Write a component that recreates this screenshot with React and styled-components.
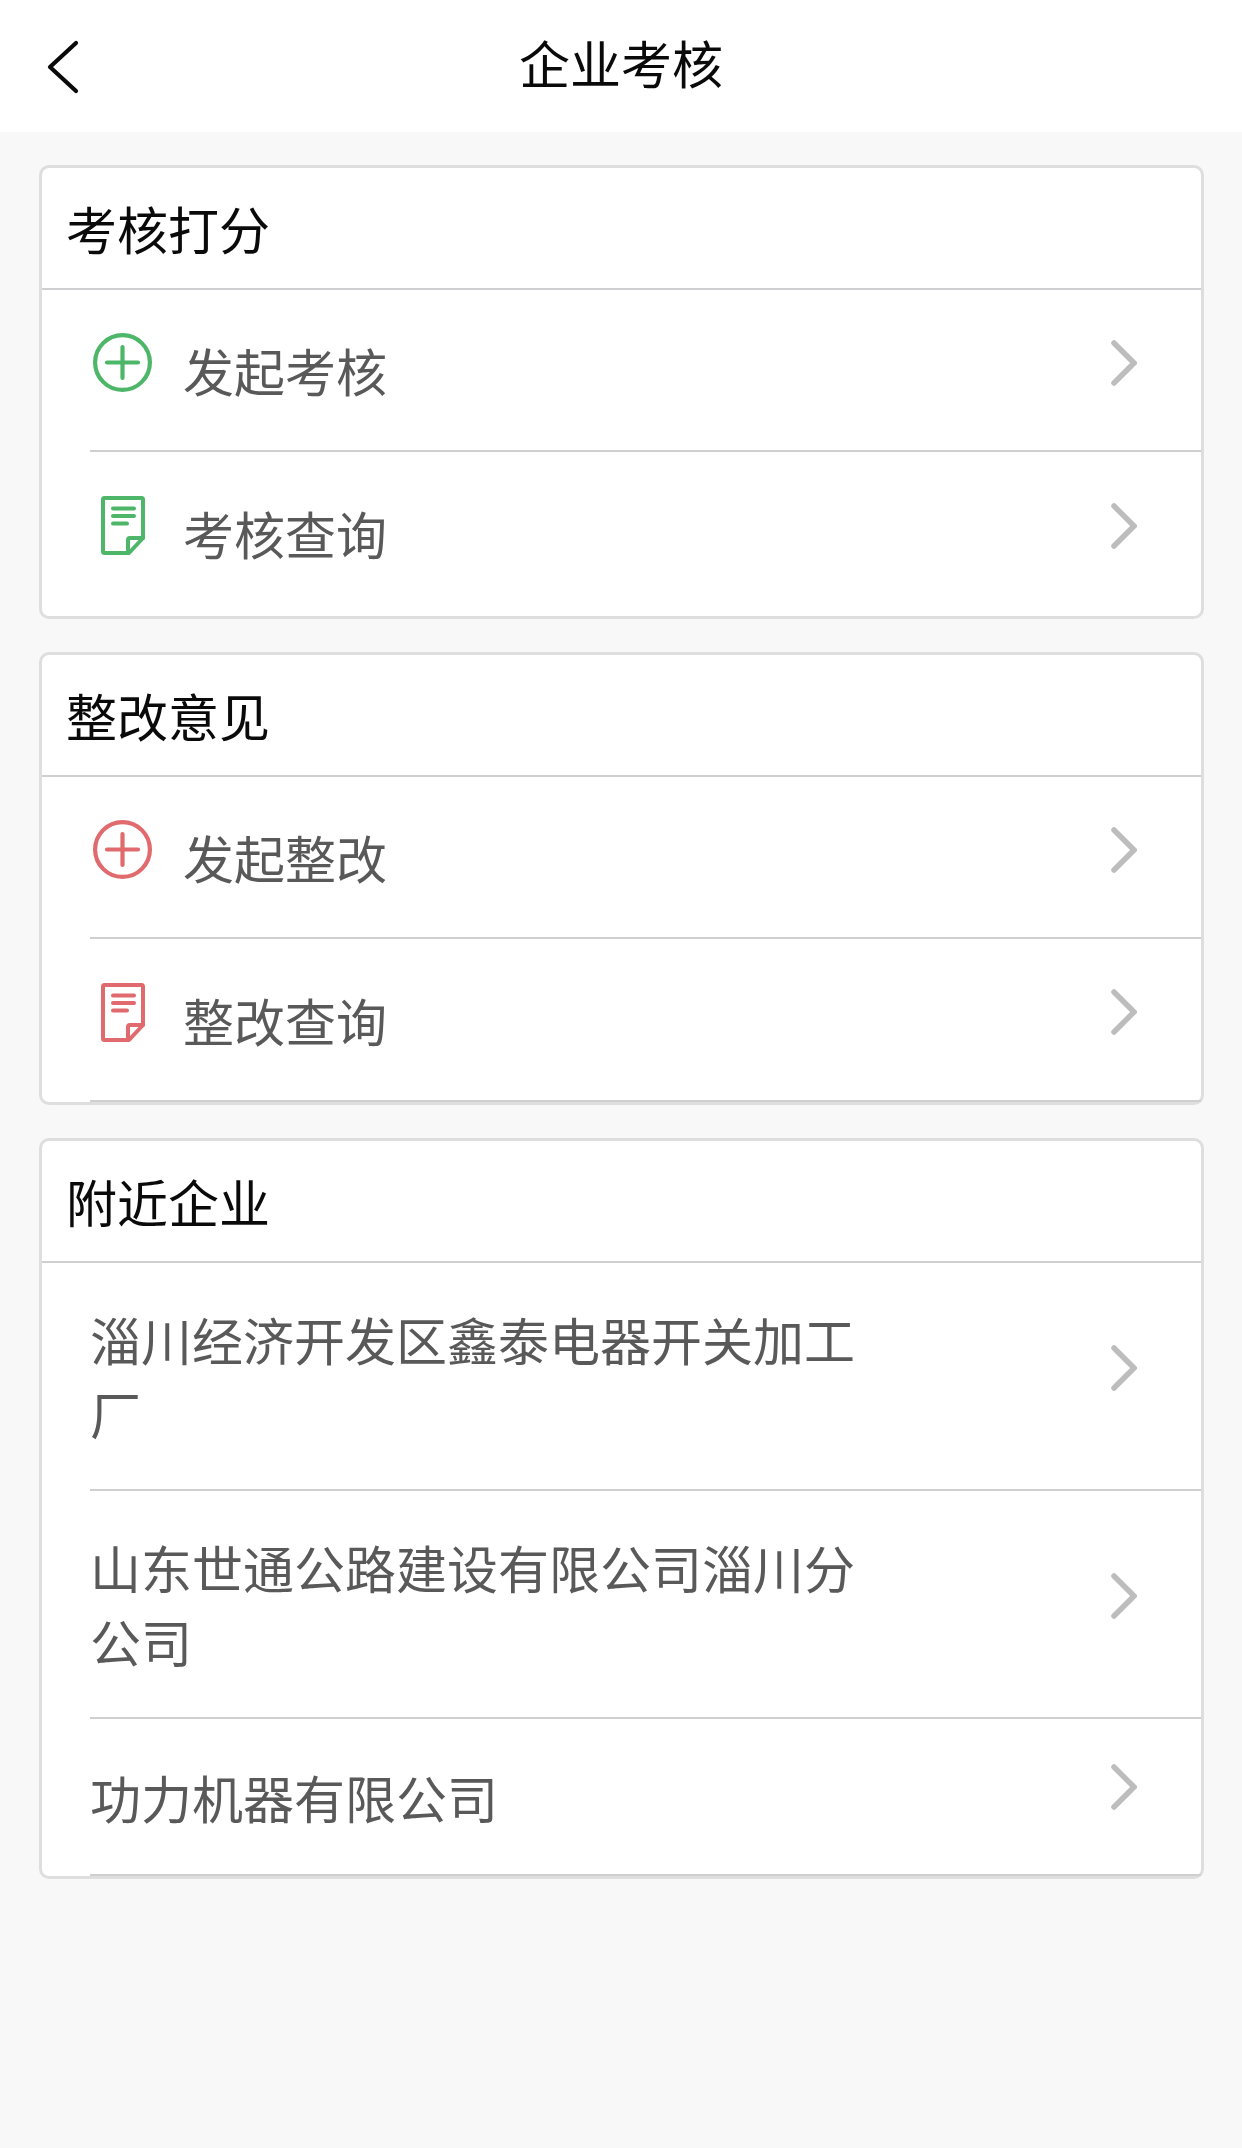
import React from 'react';
import styled, { createGlobalStyle } from 'styled-components';

const GlobalStyle = createGlobalStyle`
    html, body {
        margin: 0;
        padding: 0;
        background: #f8f8f8;
    }
    body {
        font-family: "Noto Sans CJK SC", "Noto Sans", sans-serif;
    }
`;

const Page = styled.div`
    width: 1242px;
    height: 2148px;
    overflow: hidden;
    background: #f8f8f8;
`;

const NavBar = styled.header`
    display: grid;
    grid-template-columns: 1fr auto 1fr;
    align-items: center;
    height: 132px;
    padding: 0 47px;
    box-sizing: border-box;
    background: #fff;
`;

const BackIcon = styled.svg`
    display: block;
    width: 32px;
    height: 54px;
    margin-top: 2px;
`;

const NavTitle = styled.h1`
    margin: 0 0 8px;
    font-size: 51px;
    font-weight: 400;
    line-height: 70px;
    color: #0a0a0a;
`;

const Content = styled.main`
    display: flex;
    flex-direction: column;
    gap: 33px;
    padding: 33px 38px 0 39px;
`;

const Card = styled.section`
    border: 3px solid #dedede;
    border-radius: 10px;
    background: #fff;
`;

const CardTitle = styled.h2`
    display: flex;
    align-items: center;
    box-sizing: content-box;
    height: 119px;
    margin: 0;
    padding: 0 0 1px 24px;
    border-bottom: 2px solid #cfcfd2;
    font-size: 51px;
    font-weight: 400;
    color: #0a0a0a;
`;

const Row = styled.div`
    display: flex;
    align-items: center;
    justify-content: space-between;
    box-sizing: border-box;
    height: ${({ $height }) => $height}px;
    margin-left: 48px;
    padding-right: 64px;
    border-bottom: 2px solid ${({ $plain }) => ($plain ? 'transparent' : '#cfcfd2')};
`;

const RowLead = styled.div`
    display: flex;
    align-items: center;
`;

const IconSlot = styled.div`
    display: flex;
    justify-content: center;
    width: 59px;
    margin: 0 0 15px 3px;
`;

const ActionLabel = styled.span`
    margin: 0 0 0 31px;
    font-size: 51px;
    line-height: 70px;
    color: #595959;
`;

const CompanyName = styled.span`
    width: 775px;
    font-size: 51px;
    line-height: 74px;
    color: #595959;
`;

const Chevron = styled.svg`
    display: block;
    flex: none;
    width: 26px;
    height: 46px;
    margin-bottom: ${({ $lift }) => $lift || 15}px;
`;

const PlusIcon = ({ color }) => (
    <svg width="59" height="59" viewBox="0 0 59 59" fill="none" stroke={color} strokeWidth="4.2" strokeLinecap="round">
        <circle cx="29.5" cy="29.5" r="27.4" />
        <path d="M29.5 14v31M14 29.5h31" />
    </svg>
);

const DocIcon = ({ color }) => (
    <svg width="44" height="59" viewBox="0 0 44 59" fill="none" stroke={color} strokeWidth="4" strokeLinecap="round" strokeLinejoin="round">
        <path d="M3.5 2h37a1.500 1.500 0 0 1 1.500 1.500V42L28 57H3.500A1.500 1.500 0 0 1 2 55.500V3.500A1.500 1.500 0 0 1 3.500 2z" />
        <path d="M27 56V44a2 2 0 0 1 2-2h13" />
        <path d="M12 12.500h21M12 20h21M12 27.500h14" />
    </svg>
);

const RowChevron = ({ lift }) => (
    <Chevron $lift={lift} viewBox="0 0 26 46" fill="none" stroke="#bdbdbd" strokeWidth="5.500" strokeLinecap="round" strokeLinejoin="miter">
        <path d="M3 3 23 23 3 43" />
    </Chevron>
);

const ActionRow = ({ icon: Icon, color, label, height, plain }) => (
    <Row $height={height} $plain={plain}>
        <RowLead>
            <IconSlot><Icon color={color} /></IconSlot>
            <ActionLabel>{label}</ActionLabel>
        </RowLead>
        <RowChevron />
    </Row>
);

const CompanyRow = ({ name, height, lift }) => (
    <Row $height={height}>
        <CompanyName>{name}</CompanyName>
        <RowChevron lift={lift} />
    </Row>
);

const GREEN = '#4eb669';
const RED = '#e06a6d';

export default function App() {
    return (
        <Page>
            <GlobalStyle />
            <NavBar>
                <BackIcon viewBox="0 0 32 54" fill="none" stroke="#0a0a0a" strokeWidth="4.200" strokeLinecap="round" strokeLinejoin="round">
                    <path d="M29 3 3 27l26 24" />
                </BackIcon>
                <NavTitle>企业考核</NavTitle>
            </NavBar>
            <Content>
                <Card>
                    <CardTitle>考核打分</CardTitle>
                    <ActionRow icon={PlusIcon} color={GREEN} label="发起考核" height={162} />
                    <ActionRow icon={DocIcon} color={GREEN} label="考核查询" height={164} plain />
                </Card>
                <Card>
                    <CardTitle>整改意见</CardTitle>
                    <ActionRow icon={PlusIcon} color={RED} label="发起整改" height={162} />
                    <ActionRow icon={DocIcon} color={RED} label="整改查询" height={163} />
                </Card>
                <Card>
                    <CardTitle>附近企业</CardTitle>
                    <CompanyRow name="淄川经济开发区鑫泰电器开关加工厂" height={228} lift={16} />
                    <CompanyRow name="山东世通公路建设有限公司淄川分公司" height={228} lift={16} />
                    <CompanyRow name="功力机器有限公司" height={157} lift={19} />
                </Card>
            </Content>
        </Page>
    );
}
